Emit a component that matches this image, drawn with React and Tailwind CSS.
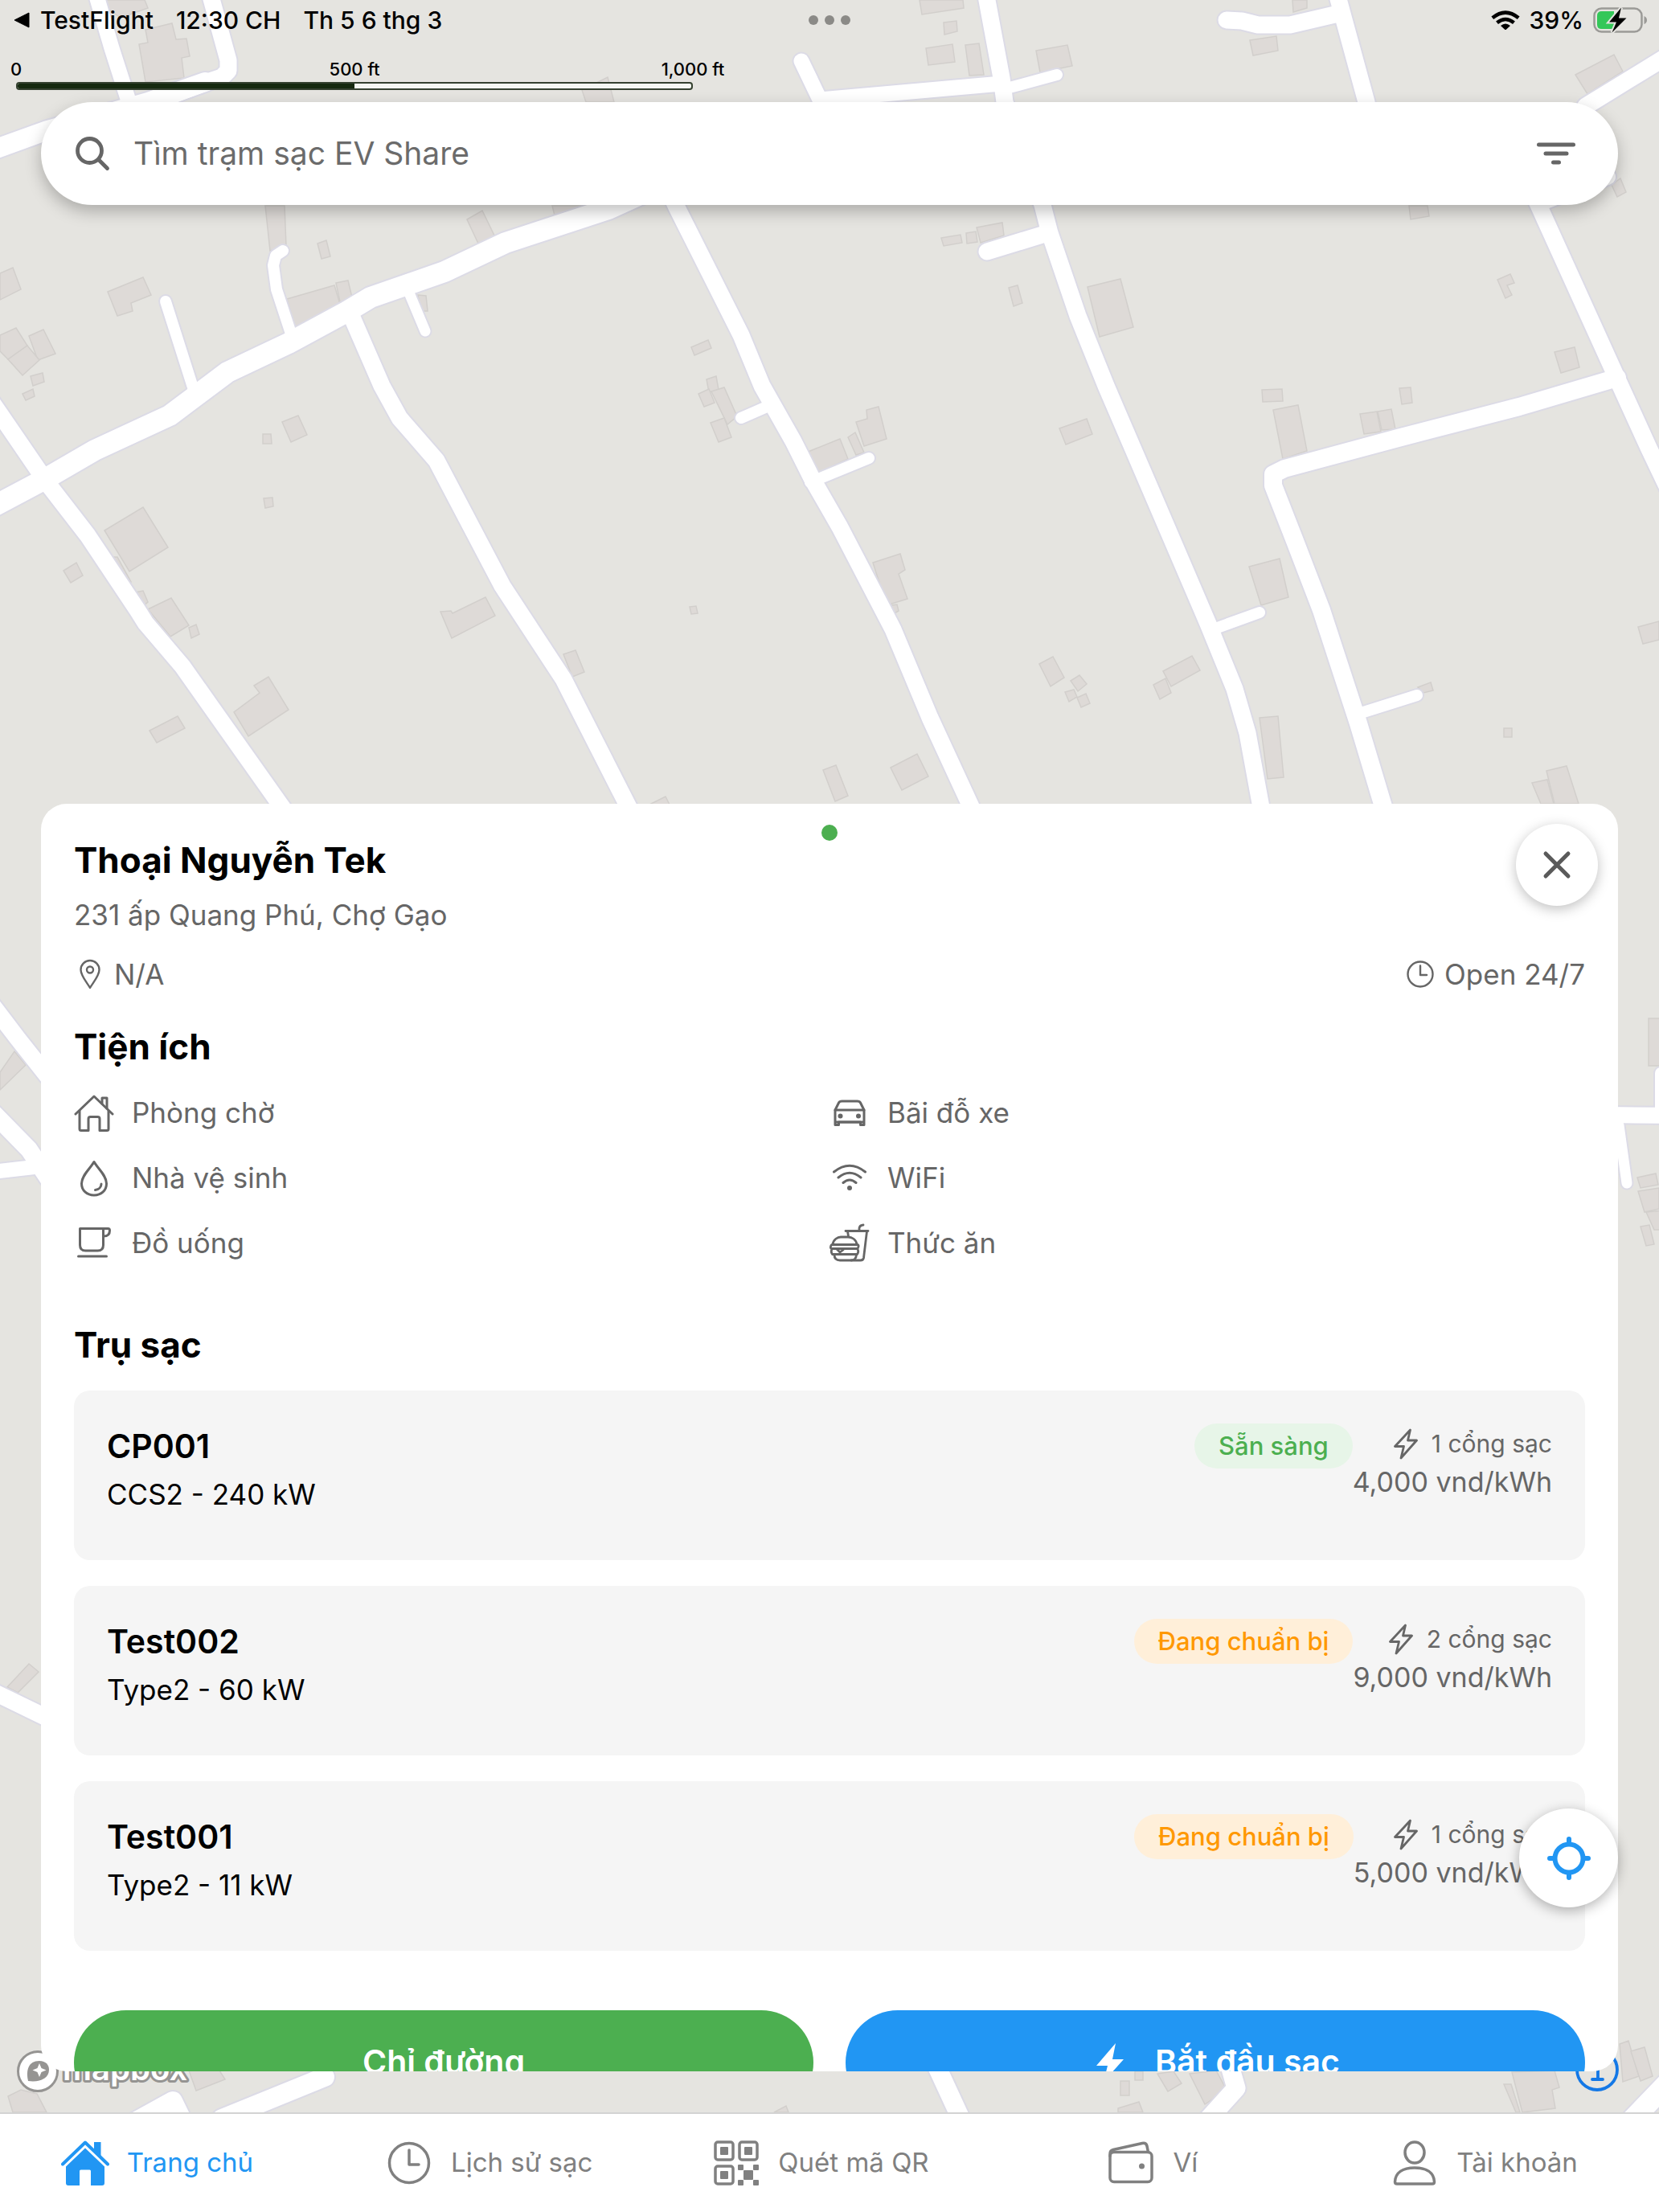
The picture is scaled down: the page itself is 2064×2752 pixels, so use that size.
import React, { useState } from "react";

const buildings = [
  "118,0 180,0 184,10 150,22",
  "181,37 214,29 219,49 232,48 236,70 226,72 229,97 181,102 173,55 184,53",
  "724,112 756,96 764,127 729,127",
  "330,256 354,256 356,306 336,312",
  "395,303 406,299 411,319 400,322",
  "581,273 600,262 616,295 596,305",
  "687,256 727,256 690,268",
  "0,340 16,333 26,360 0,373",
  "134,363 178,345 188,367 163,377 165,387 146,393",
  "0,417 20,408 34,430 10,447 0,437",
  "36,418 54,410 69,440 47,448",
  "10,447 34,430 49,448 28,467",
  "38,468 53,464 55,475 41,480",
  "28,490 41,484 43,493 32,498",
  "357,372 416,355 425,385 367,407",
  "418,352 433,349 438,370 425,385",
  "520,367 530,368 532,387 523,387",
  "860,432 881,423 885,433 864,442",
  "879,472 891,468 894,485 882,488",
  "869,490 882,484 889,501 876,506",
  "885,487 901,482 917,518 905,528",
  "884,526 901,520 910,544 894,550",
  "1144,0 1198,0 1199,10 1147,18",
  "1174,28 1190,26 1191,39 1175,43",
  "1152,60 1185,55 1188,77 1155,81",
  "1201,56 1218,54 1224,93 1206,94",
  "1289,63 1328,56 1334,82 1294,90",
  "1608,0 1626,0 1626,10 1609,15",
  "1555,50 1588,45 1590,63 1559,69",
  "1960,93 2008,68 2019,89 1975,117",
  "1171,296 1195,292 1197,302 1174,306",
  "1202,290 1214,288 1216,301 1203,303",
  "1215,283 1247,277 1249,293 1220,302",
  "1255,358 1266,355 1272,377 1261,381",
  "1353,357 1394,347 1410,407 1368,419",
  "1753,256 1776,256 1778,269 1755,273",
  "2005,230 2016,222 2023,239 2012,245",
  "1863,348 1879,341 1884,352 1875,355 1881,367 1873,371",
  "1934,438 1959,432 1965,457 1942,464",
  "1570,485 1595,484 1596,499 1571,500",
  "1741,483 1755,482 1757,501 1744,503",
  "1584,510 1615,504 1626,561 1596,571",
  "1692,515 1713,512 1718,537 1697,540",
  "1714,512 1731,509 1736,534 1719,535",
  "1318,533 1352,521 1359,540 1326,553",
  "1065,525 1079,521 1078,510 1093,506 1103,546 1075,555",
  "1055,544 1064,538 1075,563 1065,566",
  "1003,563 1045,546 1055,571 1014,590",
  "1086,700 1120,689 1126,709 1118,714 1129,745 1103,753",
  "1103,754 1116,752 1118,760 1109,765",
  "1554,705 1592,695 1603,743 1569,753",
  "1293,826 1310,817 1324,843 1307,854",
  "1332,847 1343,840 1352,851 1341,860",
  "1325,861 1336,858 1340,867 1330,873",
  "1340,868 1351,863 1356,875 1345,880",
  "1447,835 1483,816 1493,834 1457,854",
  "1435,852 1450,844 1457,862 1443,870",
  "1567,893 1590,891 1597,967 1577,969",
  "1764,855 1780,849 1783,859 1771,862",
  "1871,906 1881,906 1881,917 1871,917",
  "1924,959 1949,953 1964,1000 1934,1000",
  "1906,974 1925,970 1933,1000 1917,1000",
  "2038,780 2064,773 2064,796 2044,801",
  "1108,955 1141,938 1155,966 1122,983",
  "1024,958 1040,952 1055,990 1039,997",
  "351,525 371,517 382,541 362,550",
  "327,540 337,540 338,552 327,552",
  "328,620 339,619 340,630 330,632",
  "130,660 178,631 209,681 161,711",
  "138,693 146,693 163,724 158,727",
  "79,710 95,700 103,716 88,725",
  "168,737 178,735 184,749 178,754",
  "184,758 213,744 235,778 212,792",
  "235,781 244,777 248,789 238,794",
  "548,761 561,760 563,763 604,743 616,766 562,794",
  "701,814 716,809 727,836 712,842",
  "858,755 866,754 868,763 860,764",
  "316,853 334,842 359,883 309,916 291,886 323,862",
  "186,909 221,891 230,906 195,924",
  "808,1001 828,991 833,1001",
  "0,1334 18,1308 32,1325 0,1356",
  "9,2099 36,2070 48,2080 22,2106",
  "2051,1267 2070,1267 2070,1326 2051,1326",
  "2037,1465 2060,1460 2063,1474 2041,1478",
  "2038,1482 2064,1478 2064,1504 2046,1508",
  "2048,1508 2068,1506 2068,1530 2058,1530",
  "2041,1526 2052,1524 2058,1548 2048,1550",
  "1881,2578 1934,2576 1940,2597 1931,2600 1935,2623 1894,2628",
  "1871,2593 1880,2593 1891,2628 1886,2628",
  "1480,2580 1513,2576 1526,2600 1499,2618",
  "1440,2580 1460,2577 1470,2592 1453,2602",
  "1394,2589 1405,2589 1405,2607 1394,2607",
  "1412,2577 1422,2577 1422,2588 1412,2588",
  "1391,2623 1417,2615 1422,2628 1391,2628",
  "2015,2543 2026,2539 2039,2583 2019,2590",
  "2029,2552 2046,2547 2056,2583 2041,2589",
  "10,2608 26,2600 46,2605 58,2628 16,2628",
  "235,2576 273,2576 280,2587 244,2601",
  "963,2628 978,2620 981,2628",
];

const roads = [
  { w: 14, d: "206,375 240,482" },
  { w: 14, d: "352,312 343,318 340,330 344,360 361,412" },
  { w: 13, d: "508,362 529,412" },
  { w: 14, d: "922,520 954,506" },
  { w: 14, d: "1081,570 1008,600" },
  { w: 21, d: "1228,313 1300,291" },
  { w: 14, d: "1567,762 1509,783" },
  { w: 14, d: "1763,865 1690,888" },
  { w: 21, d: "1526,25 1545,26 1565,31 1605,31 1665,17" },
  { w: 14, d: "1315,93 1256,109" },
  { w: 19, d: "997,76 1020,124 1246,104" },
  { w: 24, d: "-10,187 59,162 184,127 255,102" },
  { w: 19, d: "120,-5 139,60 163,135" },
  { w: 21, d: "262,-5 284,75 284,88 276,96 255,103 205,122" },
  { w: 26, d: "-10,631 56,596 118,560 211,517 283,463 359,427 431,388 461,370 553,338 629,302 757,260 860,213" },
  { w: 21, d: "-20,486 58,600 109,666 171,759 181,775 227,829 263,880 355,1010" },
  { w: 21, d: "435,388 475,480 497,520 543,573 625,729 701,845 785,1010" },
  { w: 21, d: "830,232 841,256 922,417 948,480 987,549 1010,595 1045,656 1111,783 1157,893 1211,1010" },
  { w: 21, d: "1227,-5 1246,97 1250,127 1297,255 1306,290 1341,393 1376,480 1440,629 1503,776 1536,857 1552,912 1570,1010" },
  { w: 21, d: "1664,-5 1700,127 1714,200" },
  { w: 21, d: "2074,70 1973,132 1905,235 1914,255 2016,480 2052,559 2074,605" },
  { w: 20, d: "1923,250 2000,220" },
  { w: 22, d: "2012,470 1890,506 1743,544 1598,583 1584,590 1584,604 1611,673 1644,759 1690,900 1723,1010" },
  { w: 21, d: "-10,1250 22,1292 60,1340" },
  { w: 22, d: "-10,1383 36,1430 60,1466" },
  { w: 18, d: "-10,1458 60,1450" },
  { w: 21, d: "-10,2104 60,2138" },
  { w: 20, d: "2000,1387 2074,1388" },
  { w: 14, d: "2066,1335 2066,1390" },
  { w: 13, d: "2014,1400 2024,1472" },
  { w: 24, d: "404,2584 276,2636" },
  { w: 24, d: "168,2640 215,2614 230,2645" },
  { w: 23, d: "1165,2570 1195,2635" },
  { w: 23, d: "1530,2570 1538,2598 1500,2640" },
  { w: 26, d: "2078,2588 2028,2640" },
];

const MapCanvas = () => (
  <svg
    className="absolute inset-0 h-full w-full bg-[#e5e4e0]"
    viewBox="0 0 2064 2628"
    preserveAspectRatio="xMidYMin slice"
    aria-hidden="true"
  >
    <g fill="#dedad7" stroke="#d2cfcc" strokeWidth="1.5">
      {buildings.map((points) => (
        <polygon key={points} points={points} />
      ))}
    </g>
    <g fill="none" stroke="#dcdbe6" strokeLinecap="round" strokeLinejoin="round">
      {roads.map((road) => (
        <polyline key={road.d} points={road.d} strokeWidth={road.w + 4} />
      ))}
    </g>
    <g fill="none" stroke="#fff" strokeLinecap="round" strokeLinejoin="round">
      {roads.map((road) => (
        <polyline key={road.d} points={road.d} strokeWidth={road.w} />
      ))}
    </g>
  </svg>
);

const strokeProps = {
  fill: "none",
  stroke: "currentColor",
  strokeLinecap: "round",
  strokeLinejoin: "round",
};

const HouseIcon = () => (
  <svg className="h-[50px] w-[50px]" viewBox="0 0 50 50" strokeWidth="3" {...strokeProps}>
    <path d="M2 26 25 4l23 22" />
    <path d="M35 13V6h6v13" />
    <path d="M7 22v22.500q0 2 2 2h9V32q0-2.500 2.500-2.500h9q2.500 0 2.500 2.500v14.500h9q2 0 2-2V22" />
  </svg>
);

const DropIcon = () => (
  <svg className="h-[50px] w-[50px]" viewBox="0 0 50 50" strokeWidth="3" {...strokeProps}>
    <path d="M25 4.500C21 12 9.500 21 9.500 31.500 9.500 40 16 46 25 46s15.500-6 15.500-14.500C40.500 21 29 12 25 4.500Z" />
    <path d="M34 32c0 4-3 7-7.500 7.500" />
  </svg>
);

const CupIcon = () => (
  <svg className="h-[50px] w-[50px]" viewBox="0 0 50 50" strokeWidth="3" {...strokeProps}>
    <path d="M7.500 6.500h29V27q0 7-7 7h-15q-7 0-7-7Z" />
    <path d="M36.500 6.500h6q2 0 2 2.500 0 7-7.500 7" />
    <path d="M5.500 41h35" />
  </svg>
);

const CarIcon = () => (
  <svg className="h-[50px] w-[50px]" viewBox="0 0 50 50" strokeWidth="3" {...strokeProps}>
    <path d="M7 21 11.500 12q1-2 4-2h19q3 0 4 2L43 21" />
    <path d="M7 21h36v18.500h-4.500V36H11.500v3.500H7Z" />
    <path d="M8 36h34" />
    <g fill="currentColor" stroke="none">
      <circle cx="13.500" cy="28.500" r="3" />
      <circle cx="36" cy="28.500" r="3" />
    </g>
  </svg>
);

const WifiIcon = () => (
  <svg className="h-[50px] w-[50px]" viewBox="0 0 50 50" strokeWidth="3" {...strokeProps}>
    <path d="M5.500 17Q25 1.500 44.500 17M11 24Q25 12.500 39 24M17 30.500q8-7 16 0" />
    <circle cx="25" cy="37" r="3" fill="currentColor" stroke="none" />
  </svg>
);

const FoodIcon = () => (
  <svg className="h-[50px] w-[50px]" viewBox="0 0 50 50" strokeWidth="2.800" {...strokeProps}>
    <path d="M42 2q-4.500.500-5 4v3.500M20 9.500h28M22.500 10l1 6M46.500 10 42.500 43q-.500 3-4 3H27" />
    <path d="M4 26C5 20 10 17 14 17h9c5 0 10 3 11 9" />
    <path d="M3.500 26.500h31q2 0 1.500 2.500t-2 2.500h-31q-2 0-1.500-2.500t2-2.500Z" />
    <path d="M3.500 31.500Q1 35 3.500 38.500h31q2.500-3.500 0-7M9 32l4 4 4-3" />
    <path d="M6 39q0 7 7 7h14q6 0 6.500-7" />
  </svg>
);

const PinIcon = () => (
  <svg className="h-10 w-10" viewBox="0 0 40 40" strokeWidth="2.400" {...strokeProps}>
    <path d="M20 37C16 30 8.500 22 8.500 14.500a11.500 11.500 0 0 1 23 0C31.500 22 24 30 20 37Z" />
    <circle cx="20" cy="14.500" r="4" />
  </svg>
);

const ClockIcon = () => (
  <svg className="h-10 w-10" viewBox="0 0 40 40" strokeWidth="2.400" {...strokeProps}>
    <circle cx="20" cy="20" r="15.500" />
    <path d="M20 9.500V21h8" />
  </svg>
);

const BoltIcon = () => (
  <svg className="h-10 w-10" viewBox="0 0 40 40" strokeWidth="2.800" {...strokeProps}>
    <path d="M25.500 3 6.500 23.500h11L14 38l19.500-22H22.500Z" />
  </svg>
);

const HomeTabIcon = () => (
  <svg className="h-[60px] w-[60px]" viewBox="0 0 60 60">
    <path d="M2 31.500 30 4.500l28 27" fill="none" stroke="currentColor" strokeWidth="4" strokeLinecap="round" strokeLinejoin="round" />
    <path d="M41 4h8.500v18.500L41 14.500Z" fill="currentColor" />
    <path
      d="M30 11.500 54 34.500V55q0 3-3 3H37V40q0-1.500-1.500-1.500h-11Q23 38.500 23 40v18H9q-3 0-3-3V34.500Z"
      fill="currentColor"
    />
  </svg>
);

const HistoryTabIcon = () => (
  <svg className="h-[60px] w-[60px]" viewBox="0 0 60 60" strokeWidth="3.500" {...strokeProps}>
    <circle cx="30" cy="30" r="24.500" />
    <path d="M30 14v18h12" />
  </svg>
);

const QrTabIcon = () => (
  <svg className="h-[60px] w-[60px]" viewBox="0 0 60 60">
    <g fill="none" stroke="currentColor" strokeWidth="3.500">
      <rect x="4" y="4" width="22" height="22" rx="3" />
      <rect x="34" y="4" width="22" height="22" rx="3" />
      <rect x="4" y="34" width="22" height="22" rx="3" />
    </g>
    <g fill="currentColor">
      <rect x="10" y="10" width="10" height="10" rx="1" />
      <rect x="40" y="10" width="10" height="10" rx="1" />
      <rect x="10" y="40" width="10" height="10" rx="1" />
      <rect x="32" y="32" width="7" height="7" rx="1" />
      <rect x="51" y="32" width="7" height="7" rx="1" />
      <rect x="39" y="39" width="12" height="12" rx="1" />
      <rect x="32" y="51" width="7" height="7" rx="1" />
      <rect x="51" y="51" width="7" height="7" rx="1" />
    </g>
  </svg>
);

const WalletTabIcon = () => (
  <svg className="h-[60px] w-[60px]" viewBox="0 0 60 60" strokeWidth="3.500" {...strokeProps}>
    <rect x="4" y="16.500" width="52" height="37" rx="5" />
    <path d="M4 21.500v-3q0-4 4-5L44 5.500q5-1 6 3.500l1.500 7.500" />
    <circle cx="43.500" cy="34" r="3.500" fill="currentColor" stroke="none" />
  </svg>
);

const AccountTabIcon = () => (
  <svg className="h-[60px] w-[60px]" viewBox="0 0 60 60" strokeWidth="3.500" {...strokeProps}>
    <ellipse cx="30" cy="17" rx="12" ry="13" />
    <path d="M5.500 53.500C6 42 15 36 30 36s24 6 24.500 17.500q0 2.500-2.500 2.500H8q-2.500 0-2.500-2.500Z" />
  </svg>
);

const StatusBar = () => (
  <div className="flex h-[50px] items-center justify-between px-[14px] text-[30px] leading-[50px] font-medium text-black">
    <div className="flex flex-1 items-center">
      <svg className="mr-3 h-5 w-6" viewBox="0 0 24 20">
        <path d="M4 10 22 1v18Z" fill="#000" stroke="#000" strokeWidth="1" strokeLinejoin="round" />
      </svg>
      <span>TestFlight</span>
      <span className="ml-7">12:30 CH</span>
      <span className="ml-7">Th 5 6 thg 3</span>
    </div>
    <div className="flex gap-2">
      <span className="h-3 w-3 rounded-full bg-[#8b8a87]" />
      <span className="h-3 w-3 rounded-full bg-[#8b8a87]" />
      <span className="h-3 w-3 rounded-full bg-[#8b8a87]" />
    </div>
    <div className="flex flex-1 items-center justify-end gap-3">
      <svg className="h-6 w-9" viewBox="0 0 36 24">
        <g fill="none" stroke="#000" strokeWidth="4.500">
          <path d="M1.800 9.300Q18-4 34.200 9.300" />
          <path d="M7.500 15.300q10.500-8.600 21 0" />
        </g>
        <path d="M12 19q6-5 12 0l-6 5.500Z" fill="#000" />
      </svg>
      <span>39%</span>
      <svg className="h-8 w-[68px]" viewBox="0 0 68 32">
        <rect x="1.500" y="1.500" width="59" height="29" rx="9" fill="none" stroke="#9b9a97" strokeWidth="2.500" />
        <path d="M63.500 11q3.500 1.500 3.500 5t-3.500 5Z" fill="#9b9a97" />
        <path d="M10.500 5H26v22H10.500Q5 27 5 21.500v-11Q5 5 10.500 5Z" fill="#34c759" />
        <path
          d="M35 .500 20 18.500h9L23.500 31.500 41.500 13.500h-9.500Z"
          fill="#000"
          stroke="#e5e4e0"
          strokeWidth="4"
          paintOrder="stroke"
        />
      </svg>
    </div>
  </div>
);

const ScaleBar = () => (
  <div className="mt-6 ml-5 w-[842px]">
    <div className="flex justify-between text-[22px] leading-6 font-medium whitespace-nowrap text-black">
      <span className="flex w-0 justify-center">0</span>
      <span className="flex w-0 justify-center">500 ft</span>
      <span className="flex w-0 justify-center">1,000 ft</span>
    </div>
    <div className="mt-1 h-[10px] overflow-hidden rounded-[4px] border-2 border-[#34402f] bg-[#f4f7f2]">
      <div className="h-full w-1/2 bg-[#15290f]" />
    </div>
  </div>
);

const SearchBar = () => {
  const [query, setQuery] = useState("");

  return (
    <div className="mx-[51px] mt-[15px] flex h-32 items-center rounded-full bg-white pr-[53px] pl-[42px] text-[#666] shadow-[0_8px_20px_rgba(0,0,0,0.25)]">
      <svg className="h-[44px] w-[44px]" viewBox="0 0 44 44" strokeWidth="4.800" {...strokeProps}>
        <circle cx="18.500" cy="18.500" r="15" />
        <path d="m30 30 10.500 10.500" />
      </svg>
      <input
        type="text"
        aria-label="Tìm trạm sạc EV Share"
        placeholder="Tìm trạm sạc EV Share"
        className="ml-[29px] h-full flex-1 pb-[2px] text-[39px] outline-none placeholder:text-[#6b6b6b]"
        value={query}
        onChange={(e) => setQuery(e.target.value)}
      />
      <button type="button" aria-label="Bộ lọc">
        <svg className="h-[30px] w-12" viewBox="0 0 48 30" strokeWidth="5" {...strokeProps}>
          <path d="M2.500 4h43M11 15h26M20.500 26h7" />
        </svg>
      </button>
    </div>
  );
};

const MapboxLogo = () => (
  <a href="#mapbox" aria-label="Mapbox" className="absolute bottom-6 left-5 flex items-center">
    <svg className="h-[54px] w-[220px]" viewBox="0 0 220 54">
      <circle cx="27" cy="27" r="24.500" fill="#fff" stroke="#959492" strokeWidth="3" />
      <path d="M15 39c-3-13 0-25 14-25 8 0 12 5 12 11 0 11-12 16-26 14Z" fill="#959492" />
      <path d="m29 17 2.500 6 6 2.500-6 2.500-2.500 6-2.500-6-6-2.500 6-2.500Z" fill="#fff" />
      <text
        x="58"
        y="38"
        fontSize="40"
        fontWeight="600"
        fill="#fff"
        stroke="#959492"
        strokeWidth="6"
        strokeLinejoin="round"
        paintOrder="stroke"
      >
        mapbox
      </text>
    </svg>
  </a>
);

const InfoButton = () => (
  <button type="button" aria-label="Thông tin bản đồ" className="absolute right-[50px] bottom-[26px] text-[#1478e6]">
    <svg className="h-[54px] w-[54px]" viewBox="0 0 54 54" strokeWidth="3.800" {...strokeProps}>
      <circle cx="27" cy="27" r="25" />
      <path d="M22 22h6v17M21 39h13" />
      <circle cx="27" cy="14" r="2" fill="currentColor" />
    </svg>
  </button>
);

const amenities = [
  { label: "Phòng chờ", Icon: HouseIcon },
  { label: "Bãi đỗ xe", Icon: CarIcon },
  { label: "Nhà vệ sinh", Icon: DropIcon },
  { label: "WiFi", Icon: WifiIcon },
  { label: "Đồ uống", Icon: CupIcon },
  { label: "Thức ăn", Icon: FoodIcon },
];

const chargePoints = [
  { name: "CP001", spec: "CCS2 - 240 kW", status: "ready", ports: 1, price: "4,000" },
  { name: "Test002", spec: "Type2 - 60 kW", status: "preparing", ports: 2, price: "9,000" },
  { name: "Test001", spec: "Type2 - 11 kW", status: "preparing", ports: 1, price: "5,000" },
];

const ChargePointCard = ({ point }) => (
  <li className="flex items-start rounded-[20px] bg-[#f5f5f5] px-[41px] pt-[41px] pb-[58px]">
    <div className="flex-1">
      <h3 className="text-[41px] leading-[56px] font-semibold text-black">{point.name}</h3>
      <p className="mt-2 text-[35px] leading-[48px] text-black">{point.spec}</p>
    </div>
    {point.status === "ready" ? (
      <span className="rounded-full bg-[#e7f5e8] px-[30px] text-[31px] leading-[56px] font-medium text-[#4caf50]">
        Sẵn sàng
      </span>
    ) : (
      <span className="rounded-full bg-[#ffefd9] px-[30px] text-[31px] leading-[56px] font-medium text-[#ff9800]">
        Đang chuẩn bị
      </span>
    )}
    <div className="flex flex-col items-end text-[#666]">
      <div className="flex items-center gap-3 text-[30px] leading-[50px]">
        <BoltIcon />
        <span>{point.ports} cổng sạc</span>
      </div>
      <p className="text-[34px] leading-[46px]">{point.price} vnd/kWh</p>
    </div>
  </li>
);

const StationSheet = ({ onClose }) => (
  <section className="relative mx-[51px] mb-[51px] h-[60%] overflow-hidden rounded-[32px] bg-white">
    <div className="h-full overflow-y-auto px-[41px] pt-[42px] pb-10 [scrollbar-width:none]">
      <h1 className="text-[44px] leading-[56px] font-bold text-black">Thoại Nguyễn Tek</h1>
      <p className="mt-4 text-[35px] leading-[48px] text-[#666]">231 ấp Quang Phú, Chợ Gạo</p>
      <div className="mt-[26px] flex justify-between text-[35px] leading-[48px] text-[#666]">
        <span className="flex items-center gap-[10px]">
          <PinIcon />
          N/A
        </span>
        <span className="flex items-center gap-[10px]">
          <ClockIcon />
          Open 24/7
        </span>
      </div>

      <h2 className="mt-[38px] text-[44px] leading-[56px] font-bold text-black">Tiện ích</h2>
      <ul className="mt-[14px] grid grid-cols-2 text-[35px] text-[#666]">
        {amenities.map(({ label, Icon }) => (
          <li key={label} className="flex h-[81px] items-center gap-[22px]">
            <Icon />
            {label}
          </li>
        ))}
      </ul>

      <h2 className="mt-[58px] text-[44px] leading-[56px] font-bold text-black">Trụ sạc</h2>
      <ul className="mt-[29px] flex flex-col gap-8">
        {chargePoints.map((point) => (
          <ChargePointCard key={point.name} point={point} />
        ))}
      </ul>

      <div className="mt-[74px] grid grid-cols-2 gap-10 text-[41px] font-semibold text-white">
        <button type="button" className="h-[130px] rounded-full bg-[#4caf50]">
          Chỉ đường
        </button>
        <button type="button" className="flex h-[130px] items-center justify-center gap-8 rounded-full bg-[#2196f3]">
          <svg className="h-12 w-12" viewBox="0 0 48 48">
            <path d="M31 0 7 28h14L16 48 41 20H27Z" fill="currentColor" />
          </svg>
          Bắt đầu sạc
        </button>
      </div>
    </div>

    <span className="absolute top-[26px] left-1/2 h-5 w-5 -translate-x-1/2 rounded-full bg-[#4caf50]" />
    <button
      type="button"
      aria-label="Đóng"
      onClick={onClose}
      className="absolute top-[25px] right-[25px] flex h-[102px] w-[102px] items-center justify-center rounded-full bg-white text-[#5a5a5a] shadow-[0_4px_16px_rgba(0,0,0,0.25)]"
    >
      <svg className="h-9 w-9" viewBox="0 0 36 36" strokeWidth="5" {...strokeProps}>
        <path d="m4 4 28 28M32 4 4 32" />
      </svg>
    </button>
  </section>
);

const tabs = [
  { id: "home", label: "Trang chủ", Icon: HomeTabIcon },
  { id: "history", label: "Lịch sử sạc", Icon: HistoryTabIcon },
  { id: "qr", label: "Quét mã QR", Icon: QrTabIcon },
  { id: "wallet", label: "Ví", Icon: WalletTabIcon },
  { id: "account", label: "Tài khoản", Icon: AccountTabIcon },
];

const TabBar = ({ active, onChange }) => (
  <nav className="grid h-[124px] grid-cols-5 border-t-2 border-[#d3d3d3] bg-white text-[33px]">
    {tabs.map(({ id, label, Icon }) => (
      <button
        key={id}
        type="button"
        onClick={() => onChange(id)}
        className={`flex items-center justify-center gap-[22px] pr-[22px] ${
          active === id ? "text-[#2196f3]" : "text-[#808080]"
        }`}
      >
        <Icon />
        {label}
      </button>
    ))}
  </nav>
);

export default function App() {
  const [activeTab, setActiveTab] = useState("home");
  const [sheetOpen, setSheetOpen] = useState(true);

  return (
    <div className="flex h-screen flex-col font-['Inter','Noto_Sans',sans-serif]">
      <main className="relative flex min-h-0 flex-1 flex-col justify-between overflow-hidden">
        <MapCanvas />
        <MapboxLogo />
        <InfoButton />

        <header className="relative">
          <StatusBar />
          <ScaleBar />
          <SearchBar />
        </header>

        {sheetOpen && <StationSheet onClose={() => setSheetOpen(false)} />}

        {/* Locate me */}
        <button
          type="button"
          aria-label="Vị trí của tôi"
          className="absolute right-[51px] bottom-[255px] flex h-[123px] w-[123px] items-center justify-center rounded-full bg-white text-[#2196f3] shadow-[0_4px_16px_rgba(0,0,0,0.3)]"
        >
          <svg className="h-[54px] w-[54px]" viewBox="0 0 54 54" strokeWidth="6" {...strokeProps}>
            <circle cx="27" cy="27" r="17.500" />
            <path d="M27 3v6M27 45v6M3 27h6M45 27h6" />
          </svg>
        </button>
      </main>

      <TabBar active={activeTab} onChange={setActiveTab} />
    </div>
  );
}
